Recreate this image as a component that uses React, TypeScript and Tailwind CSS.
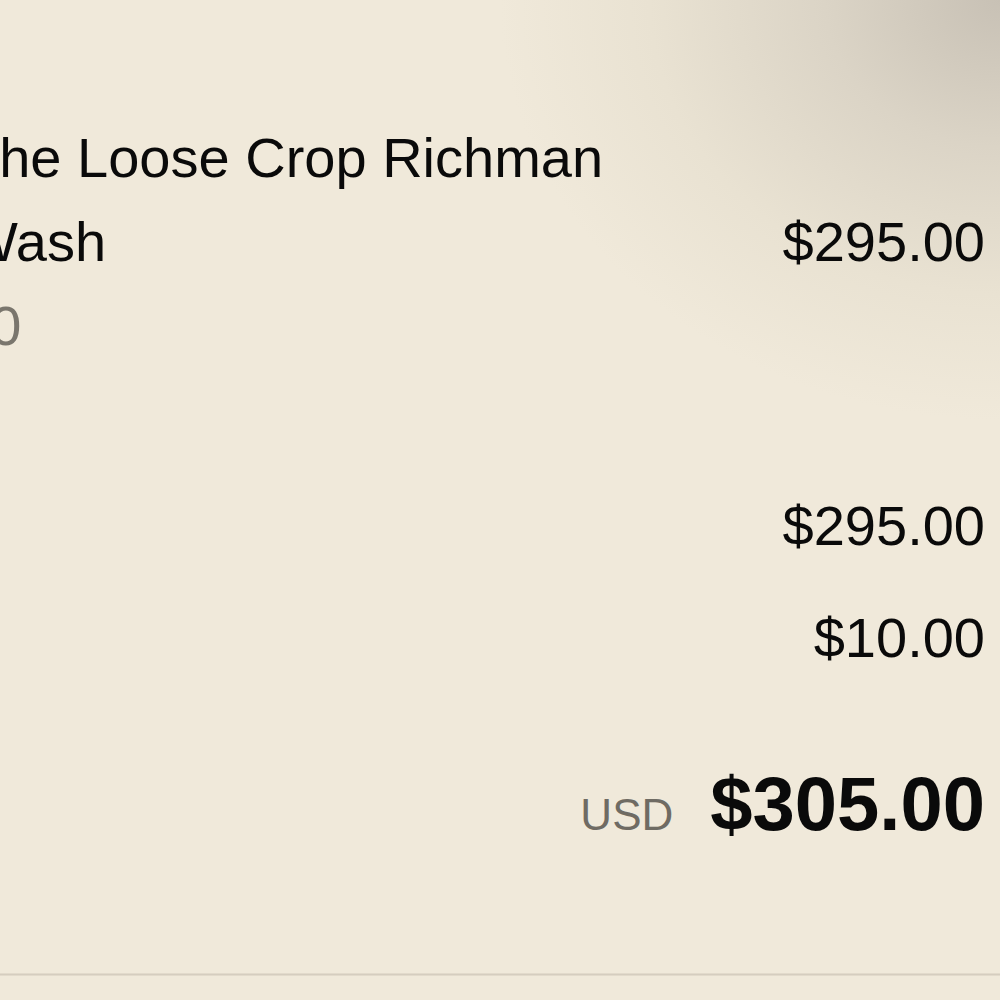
import React from 'react';

const summary = [
  { amount: '$295.00', gap: 'mt-[116px]' },
  { amount: '$10.00', gap: 'mt-[28px]' },
];

const App: React.FC = () => {
  return (
    <div
      className="relative w-[1000px] h-[1000px] overflow-hidden bg-[#f0e9da] bg-[radial-gradient(ellipse_50%_42%_at_100%_0%,#c8c1b5_0%,#dbd4c6_35%,#e9e2d2_70%,#f0e9da_100%)] text-[#0a0a0a]"
      style={{ fontFamily: '"Liberation Sans", Arial, Helvetica, sans-serif' }}
    >
      <div className="flex flex-col pt-[116px] pr-[15px] ml-[-35px]">
        {/* Line item */}
        <div className="flex items-center justify-between">
          <div className="flex flex-col text-[56px] leading-[84px] whitespace-nowrap">
            <span>The Loose Crop Richman</span>
            <span>Wash</span>
            <span className="text-[#7a766d] ml-[-6px]">30</span>
          </div>
          <span className="text-[56px] leading-[84px]">$295.00</span>
        </div>

        {/* Subtotal / shipping */}
        {summary.map((row) => (
          <div key={row.amount} className={`flex justify-end ${row.gap}`}>
            <span className="text-[56px] leading-[84px]">{row.amount}</span>
          </div>
        ))}

        {/* Total */}
        <div className="flex items-baseline justify-end gap-[37px] mt-[82px]">
          <span className="text-[44px] text-[#6f6b63]">USD</span>
          <span className="text-[76px] leading-[84px] font-bold">$305.00</span>
        </div>
      </div>

      <div className="absolute left-0 right-0 top-[973px] h-[3px] bg-[#d5cdbf] border-y border-[#e2dacb]" />
    </div>
  );
};

export default App;
